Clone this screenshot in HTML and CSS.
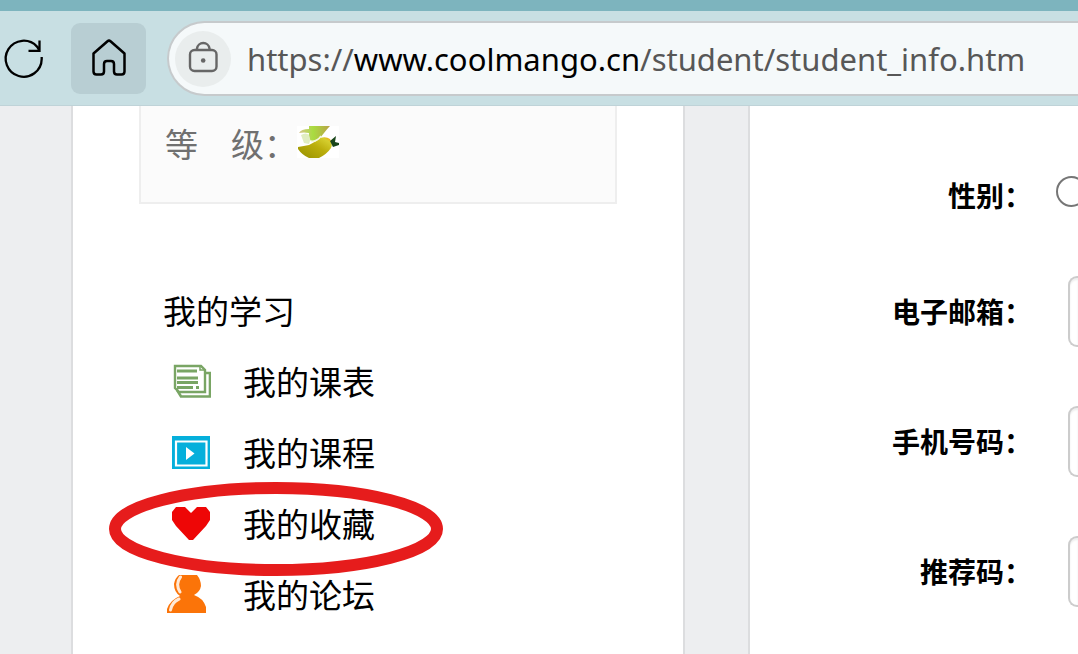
FILE: index.html
```html
<!DOCTYPE html>
<html lang="zh-CN">
<head>
<meta charset="utf-8">
<title>student_info</title>
<link rel="stylesheet" href="styles.css">
</head>
<body>
<header class="browser">
  <div class="toolbar">
    <button class="tool-button" type="button" aria-label="刷新">
      <svg width="48" height="48" viewBox="0 0 48 48" fill="none" stroke="#000" stroke-width="2.300">
        <path d="M41.700 22V24A18 18 0 1 1 37 11.600L39.500 15.300M28.500 15.800H39.500V5.500"/>
      </svg>
    </button>
    <button class="tool-button tool-button-home" type="button" aria-label="主页">
      <svg width="48" height="48" viewBox="0 0 48 48" fill="none" stroke="#000" stroke-width="2.500" stroke-linejoin="round">
        <path d="M8.500 18.500 22.500 6.300Q24 5 25.500 6.300L39.500 18.500V36.500Q39.500 39.500 36.500 39.500H32Q29 39.500 29 36.500V29Q29 26 26 26H22Q19 26 19 29V36.500Q19 39.500 16 39.500H11.500Q8.500 39.500 8.500 36.500Z"/>
      </svg>
    </button>
    <div class="address">
      <button class="site-info" type="button" aria-label="查看站点信息">
        <svg width="32" height="36" viewBox="0 0 32 36" fill="none" stroke="#666" stroke-width="2.400">
          <rect x="3" y="9" width="26.500" height="21" rx="4.500"/>
          <path d="M10 9V7.500A6.300 6.300 0 0 1 22.500 7.500V9"/>
          <circle cx="16.200" cy="19.500" r="2.300" fill="#666" stroke="none"/>
        </svg>
      </button>
      <div class="url">https://<span class="url-host">www.coolmango.cn</span>/student/student_info.htm</div>
    </div>
  </div>
</header>
<main class="page">
  <aside class="sidebar">
    <section class="level">
      <span>等　级：</span>
      <svg class="mango" width="42" height="32" viewBox="0 0 42 32">
        <defs>
          <linearGradient id="skin" x1="0" y1="1" x2="1" y2="0">
            <stop offset="0" stop-color="#969000"/><stop offset=".55" stop-color="#bbae0c"/><stop offset=".85" stop-color="#d5ce2e"/><stop offset="1" stop-color="#ff9800"/>
          </linearGradient>
          <linearGradient id="leaf" x1="0" y1="0" x2="1" y2="0">
            <stop offset="0" stop-color="#d7c58d"/><stop offset=".45" stop-color="#a9dc40"/><stop offset="1" stop-color="#b9a247"/>
          </linearGradient>
        </defs>
        <rect width="42" height="32" fill="#fff"/>
        <path d="M1 21Q7 20 12 19Q20 15 23 12Q29 10 33 13Q36 18 34 22Q30 28 22 32H12Q5 29 1 23Z" fill="url(#skin)"/>
        <path d="M12 0H33Q30 3 27 7L23 12Q18 16 14 15Q11 11 12 7Q7 6 2 7Q4 3 12 3Z" fill="url(#leaf)"/>
        <path d="M4 9Q9 6 12 9Q14 14 12 18L7 17Z" fill="#e0edc0"/>
        <path d="M14 15Q20 16 24 10" fill="none" stroke="#f4f7dd" stroke-width="1.500"/>
        <path d="M33 15 39 10 38 16 42 17V19L36 21Z" fill="#18451a"/>
      </svg>
    </section>
    <nav class="study">
      <h2 class="study-title">我的学习</h2>
      <ul class="menu">
        <li class="menu-item">
          <a class="menu-link" href="#timetable">
            <svg class="menu-icon" width="44" height="43" viewBox="0 0 44 43" fill="none" stroke="#79a564" stroke-width="2.400">
              <path d="M8 4H34L38 8V30H12L8 26Z" fill="#fff"/>
              <path d="M10 28 14 34.500H43V11H38" stroke-width="2.600"/>
              <path d="M10 9H30M10 16H31M10 20.500H31M10 25.500H26M29 25.500H32" stroke-width="2.800"/>
              <path d="M33 4V8H38" stroke-width="1.500"/>
            </svg>
            <span class="menu-text">我的课表</span>
          </a>
        </li>
        <li class="menu-item">
          <a class="menu-link" href="#courses">
            <svg class="menu-icon" width="44" height="43" viewBox="0 0 44 43">
              <path d="M5 3H43V36H5Z" fill="#05afdb"/>
              <path d="M9 8.500H39.500V32.500H9Z" fill="none" stroke="#fff" stroke-width="2.200"/>
              <path d="M19 14 27.500 20.500 19 27Z" fill="#fff"/>
            </svg>
            <span class="menu-text">我的课程</span>
          </a>
        </li>
        <li class="menu-item">
          <a class="menu-link" href="#favorites">
            <svg class="menu-icon" width="44" height="43" viewBox="0 0 44 43">
              <path d="M9 3H18L24 9L30 3H39L43 8V16L39 22L26 36H22L9 22L5 16V8Z" fill="#ee0606"/>
            </svg>
            <span class="menu-text">我的收藏</span>
          </a>
          <svg class="marker" width="334" height="94" viewBox="0 0 334 94" aria-hidden="true">
            <ellipse cx="167" cy="47" rx="161" ry="41" fill="none" stroke="#e61c1c" stroke-width="12"/>
          </svg>
        </li>
        <li class="menu-item">
          <a class="menu-link" href="#forum">
            <svg class="menu-icon" width="44" height="43" viewBox="0 0 44 43">
              <path d="M12 0H30Q34 5 34 11Q33 17 27 20Q36 23 39 32V38H0V34Q3 25 13 21Q7 17 7 9Q8 3 12 0Z" fill="#fb7409"/>
              <path d="M13.500 2Q8 9 13 17M12 24Q5 27 3.500 35" fill="none" stroke="#ffe9d6" stroke-width="3" stroke-linecap="round"/>
            </svg>
            <span class="menu-text">我的论坛</span>
          </a>
        </li>
      </ul>
    </nav>
  </aside>
  <form class="panel">
    <div class="field field-choice">
      <label class="field-label" for="gender">性别：</label>
      <input class="field-radio" id="gender" type="radio" name="gender">
    </div>
    <div class="field">
      <label class="field-label" for="email">电子邮箱：</label>
      <input class="field-input" id="email" type="email">
    </div>
    <div class="field">
      <label class="field-label" for="phone">手机号码：</label>
      <input class="field-input" id="phone" type="tel">
    </div>
    <div class="field">
      <label class="field-label" for="code">推荐码：</label>
      <input class="field-input" id="code" type="text">
    </div>
  </form>
</main>
</body>
</html>
```

FILE: styles.css
```css
* {
  box-sizing: border-box;
}

body {
  display: flex;
  flex-direction: column;
  min-height: 100vh;
  margin: 0;
  overflow: hidden;
  background: #edeef0;
  color: #000;
  font-family: "Noto Sans CJK SC", sans-serif;
}

button {
  padding: 0;
  border: 0;
  background: none;
}

svg {
  display: block;
  flex: none;
}

.browser {
  border-top: 11px solid #7db4be;
  border-bottom: 1px solid #bfd3d8;
  background: #c8dfe3;
}

.toolbar {
  display: flex;
  align-items: center;
  padding: 10px 0 9px;
}

.tool-button {
  display: flex;
  align-items: center;
  justify-content: center;
  flex: none;
  width: 48px;
  height: 71px;
}

.tool-button-home {
  width: 75px;
  margin: 0 21px 0 23px;
  border-radius: 9px;
  background: #b8ced3;
}

.address {
  display: flex;
  align-items: center;
  flex: 1;
  gap: 16px;
  min-width: 0;
  height: 75px;
  padding-left: 6px;
  border: 2px solid #c6cacc;
  border-right: 0;
  border-radius: 38px 0 0 38px;
  background: #f5f9fa;
}

.site-info {
  display: flex;
  align-items: center;
  justify-content: center;
  flex: none;
  width: 56px;
  height: 56px;
  border-radius: 50%;
  background: #e9eded;
}

.url {
  color: #575757;
  font: 31px/44px "Noto Sans", sans-serif;
  white-space: nowrap;
}

.url-host {
  color: #000;
}

.page {
  display: flex;
  flex: 1;
  gap: 63px;
  padding-left: 71px;
}

.sidebar {
  flex: none;
  width: 614px;
  padding: 0 66px;
  border: solid #dcdddf;
  border-width: 0 2px;
  background: #fff;
}

.level {
  display: flex;
  padding: 17px 24px 39px;
  border: 2px solid #eee;
  border-top: 0;
  background: #fbfbfb;
  color: #707070;
  font-size: 33px;
  line-height: 40px;
}

.mango {
  margin-top: 3px;
}

.study {
  padding: 82px 24px 0;
}

.study-title {
  margin: 0 0 14px;
  font-size: 33px;
  font-weight: 400;
  line-height: 48px;
}

.menu {
  margin: 0;
  padding: 0;
  list-style: none;
}

.menu-item {
  position: relative;
}

.menu-link {
  display: flex;
  align-items: center;
  gap: 32px;
  height: 71px;
  padding-left: 4px;
  color: #000;
  font-size: 33px;
  line-height: 48px;
  text-decoration: none;
}

.menu-text {
  padding-bottom: 5px;
}

.marker {
  position: absolute;
  top: -8px;
  left: -54px;
  pointer-events: none;
  z-index: 1;
}

.panel {
  flex: 1;
  min-width: 0;
  padding-top: 30px;
  border-left: 2px solid #dcdddf;
  background: #fff;
}

.field {
  display: flex;
  align-items: center;
  gap: 36px;
  height: 130px;
}

.field-choice {
  gap: 24px;
  height: 110px;
}

.field-label {
  flex: none;
  width: 282px;
  font-size: 28px;
  font-weight: 700;
  line-height: 40px;
  text-align: right;
}

.field-choice .field-label {
  padding-top: 8px;
}

.field-radio {
  appearance: none;
  flex: none;
  width: 31px;
  height: 31px;
  margin: 0;
  border: 2px solid #767676;
  border-radius: 50%;
  background: #fff;
}

.field-input {
  flex: 1;
  min-width: 0;
  height: 71px;
  margin: 0;
  padding: 0 0 0 8px;
  border: 2px solid #ccc;
  border-right: 0;
  border-radius: 9px 0 0 9px;
  background: #fff;
  box-shadow: inset 0 2px 2px #ededed;
}
```
